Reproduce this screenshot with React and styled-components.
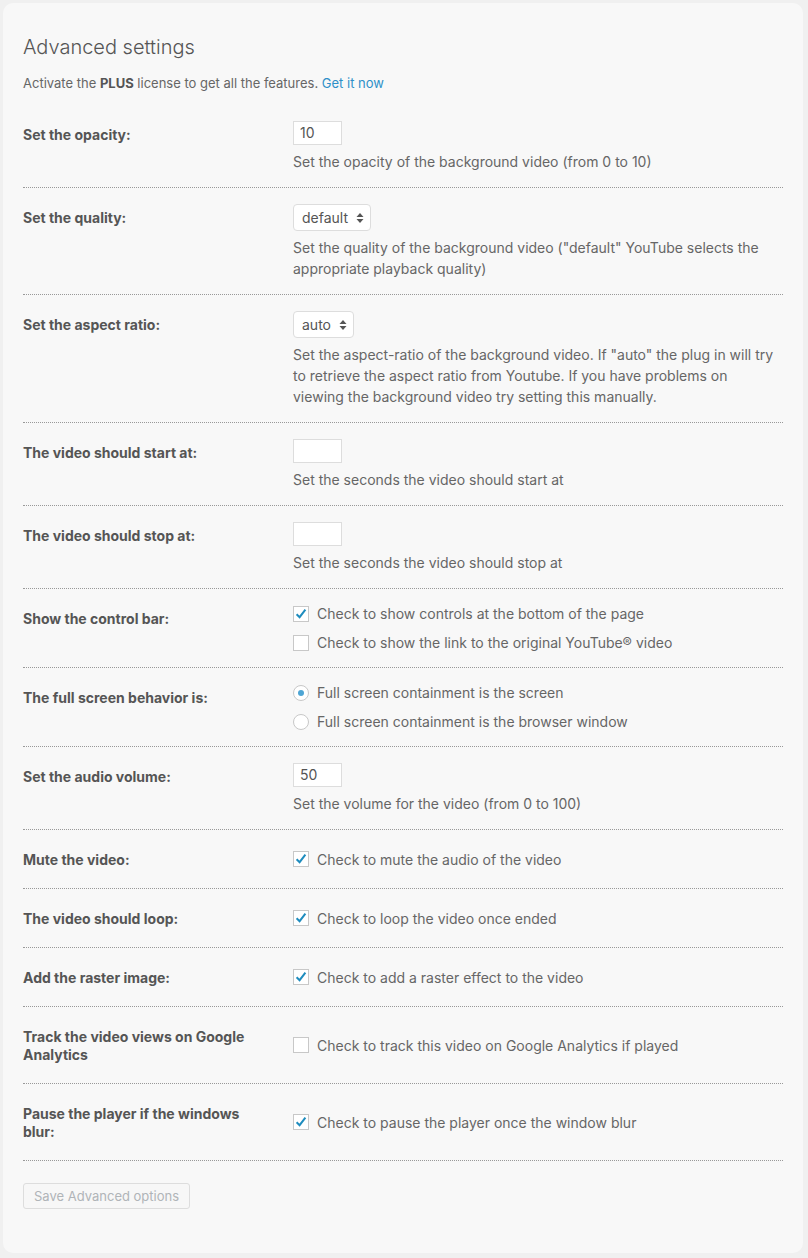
import styled, {createGlobalStyle} from "styled-components";

const GlobalStyle = createGlobalStyle`
  html, body {
    margin: 0;
    background: #f0f0f0;
  }
  body {
    font-family: "Inter", "Noto Sans", sans-serif;
    color: #555;
  }
`;

const rows = [
    {label: "Set the opacity:", type: "input", value: "10", desc: ["Set the opacity of the background video (from 0 to 10)"]},
    {label: "Set the quality:", type: "select", value: "default", desc: ["Set the quality of the background video (\"default\" YouTube selects the", "appropriate playback quality)"]},
    {label: "Set the aspect ratio:", type: "select", value: "auto", desc: ["Set the aspect-ratio of the background video. If \"auto\" the plug in will try", "to retrieve the aspect ratio from Youtube. If you have problems on", "viewing the background video try setting this manually."]},
    {label: "The video should start at:", type: "input", value: "", desc: ["Set the seconds the video should start at"]},
    {label: "The video should stop at:", type: "input", value: "", desc: ["Set the seconds the video should stop at"]},
    {label: "Show the control bar:", type: "check", items: [{text: "Check to show controls at the bottom of the page", on: true}, {text: "Check to show the link to the original YouTube® video", on: false}]},
    {label: "The full screen behavior is:", type: "radio", items: [{text: "Full screen containment is the screen", on: true}, {text: "Full screen containment is the browser window", on: false}]},
    {label: "Set the audio volume:", type: "input", value: "50", desc: ["Set the volume for the video (from 0 to 100)"]},
    {label: "Mute the video:", type: "check", items: [{text: "Check to mute the audio of the video", on: true}]},
    {label: "The video should loop:", type: "check", items: [{text: "Check to loop the video once ended", on: true}]},
    {label: "Add the raster image:", type: "check", items: [{text: "Check to add a raster effect to the video", on: true}]},
    {label: "Track the video views on Google Analytics", type: "check", items: [{text: "Check to track this video on Google Analytics if played", on: false}]},
    {label: "Pause the player if the windows blur:", type: "check", items: [{text: "Check to pause the player once the window blur", on: true}]},
];

const Field = ({row}) => {
    if (row.type === "check" || row.type === "radio") {
        return (
            <FieldCell $compact>
                {row.items.map((it) => (
                    <Option key={it.text}>
                        {row.type === "check" ? (
                            <CheckBox>
                                {it.on && (
                                    <svg width="14" height="14" viewBox="0 0 14 14">
                                        <path d="M2.6 7.2 L5.6 10.2 L11.4 2.6" fill="none" stroke="#1e8cbe" strokeWidth="2"/>
                                    </svg>
                                )}
                            </CheckBox>
                        ) : (
                            <Radio>{it.on && <Dot/>}</Radio>
                        )}
                        {it.text}
                    </Option>
                ))}
            </FieldCell>
        );
    }
    return (
        <FieldCell>
            {row.type === "input" ? (
                <TextInput>{row.value}</TextInput>
            ) : (
                <SelectBox>
                    {row.value}
                    <svg width="8" height="12" viewBox="0 0 8 12">
                        <path d="M4 1 L7.5 5 L0.5 5 Z M4 11 L7.5 7 L0.5 7 Z" fill="#555"/>
                    </svg>
                </SelectBox>
            )}
            <Desc>
                {row.desc.map((d) => (
                    <div key={d}>{d}</div>
                ))}
            </Desc>
        </FieldCell>
    );
};

export default function App() {
    return (
        <>
            <GlobalStyle/>
            <Card>
                <Title>Advanced settings</Title>
                <Intro>
                    Activate the <b>PLUS</b> license to get all the features. <IntroLink href="#">Get it now</IntroLink>
                </Intro>
                <Table>
                    {rows.map((row) => (
                        <Row key={row.label}>
                            <Label>{row.label}</Label>
                            <Field row={row}/>
                        </Row>
                    ))}
                </Table>
                <SaveButton disabled>Save Advanced options</SaveButton>
            </Card>
        </>
    );
}

const Card = styled.div`
  margin: 3px 5px 5px 3px;
  padding: 30px 20px 43px;
  background: #f8f8f8;
  border-radius: 10px;
  min-height: 1250px;
  box-sizing: border-box;
`;

const Title = styled.h2`
  margin: 0;
  font-size: 20px;
  font-weight: 300;
  line-height: 28px;
  color: #555;
`;

const Intro = styled.p`
  margin: 12px 0 0;
  font-size: 13px;
  line-height: 20px;
  color: #666;

  b {
    font-weight: 700;
    color: #555;
  }
`;

const IntroLink = styled.a`
  color: #2e90c8;
  text-decoration: none;
`;

const Table = styled.div`
  margin-top: 12px;
`;

const Row = styled.div`
  display: grid;
  grid-template-columns: 270px 1fr;
  border-bottom: 1px dotted #999;
`;

const Label = styled.div`
  align-self: start;
  padding: 21px 20px 19px 0;
  font-size: 14px;
  line-height: 18px;
  font-weight: 700;
  color: #555;
`;

const FieldCell = styled.div`
  align-self: center;
  padding: ${(p) => (p.$compact ? "10px 0" : "16px 0 15px")};
  font-size: 14px;
  color: #666;
`;

const TextInput = styled.div`
  box-sizing: border-box;
  width: 49px;
  height: 24px;
  padding: 0 6px;
  border: 1px solid #ddd;
  background: #fff;
  font-size: 14px;
  line-height: 22px;
  color: #555;
`;

const SelectBox = styled.div`
  box-sizing: border-box;
  display: inline-flex;
  align-items: center;
  gap: 8px;
  height: 27px;
  padding: 0 6px 0 8px;
  border: 1px solid #ddd;
  border-radius: 4px;
  background: #fff;
  font-size: 14px;
  color: #555;
`;

const Desc = styled.div`
  margin-top: 6px;
  line-height: 21px;
  white-space: nowrap;
`;

const Option = styled.div`
  display: flex;
  align-items: center;
  gap: 8px;
  height: 29px;
  font-size: 14px;
  color: #666;
`;

const CheckBox = styled.span`
  box-sizing: border-box;
  flex: none;
  width: 16px;
  height: 16px;
  border: 1px solid #c8c8c8;
  background: #fff;
  display: flex;
  align-items: center;
  justify-content: center;
`;

const Radio = styled(CheckBox)`
  border-radius: 50%;
`;

const Dot = styled.span`
  width: 6px;
  height: 6px;
  border-radius: 50%;
  background: #4ea5d4;
`;

const SaveButton = styled.button`
  margin-top: 22px;
  height: 26px;
  padding: 0 10px;
  border: 1px solid #ddd;
  border-radius: 3px;
  background: #f7f7f7;
  font-family: inherit;
  font-size: 13px;
  font-weight: 400;
  color: #b0b4b8;
`;
